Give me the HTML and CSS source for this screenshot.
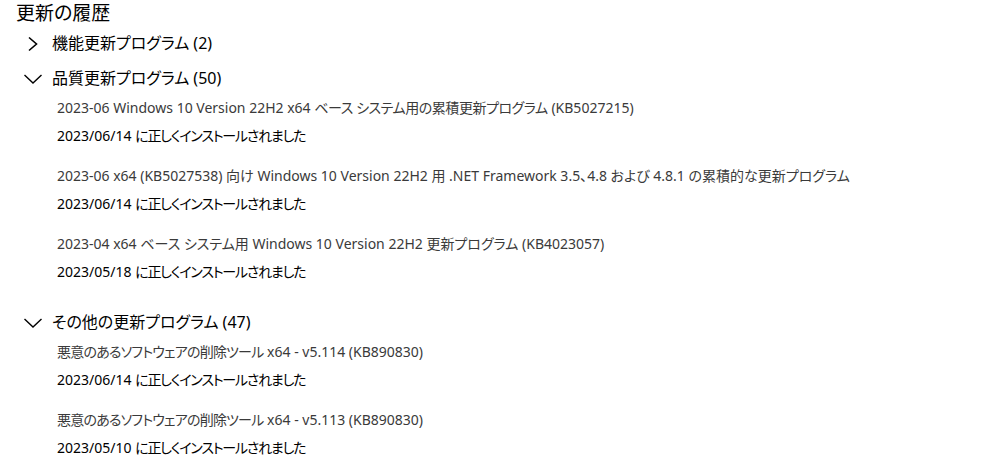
FILE: index.html
```html
<!DOCTYPE html>
<html lang="ja">
<head>
<meta charset="utf-8">
<link rel="stylesheet" href="styles.css">
</head>
<body>
<div class="page">
  <h1 class="title">更新の履歴</h1>

  <div class="group">
    <div class="group-head">
      <svg class="chev chev-right" width="12" height="16" viewBox="0 0 12 16"><path d="M2 1.5 L9.5 8 L2 14.5" fill="none" stroke="#000" stroke-width="1.6"/></svg>
      <span>機能更新プログラム (2)</span>
    </div>
  </div>

  <div class="group">
    <div class="group-head">
      <svg class="chev chev-down" width="20" height="10" viewBox="0 0 20 10"><path d="M1.5 1 L10 9 L18.5 1" fill="none" stroke="#000" stroke-width="1.4"/></svg>
      <span>品質更新プログラム (50)</span>
    </div>
    <div class="items">
      <div class="item">
        <div class="item-name">2023-06 Windows 10 Version 22H2 x64 <span class="ja">ベース システム用の累積更新プログラム</span> (KB5027215)</div>
        <div class="item-date">2023/06/14 <span class="ja-tight">に正しくインストールされました</span></div>
      </div>
      <div class="item">
        <div class="item-name">2023-06 x64 (KB5027538) 向け Windows 10 Version 22H2 用 .NET Framework 3.5、4.8 および 4.8.1 の累積的な更新プログラム</div>
        <div class="item-date">2023/06/14 <span class="ja-tight">に正しくインストールされました</span></div>
      </div>
      <div class="item">
        <div class="item-name">2023-04 x64 ベース システム用 Windows 10 Version 22H2 更新プログラム (KB4023057)</div>
        <div class="item-date">2023/05/18 <span class="ja-tight">に正しくインストールされました</span></div>
      </div>
    </div>
  </div>

  <div class="group group-other">
    <div class="group-head">
      <svg class="chev chev-down" width="20" height="10" viewBox="0 0 20 10"><path d="M1.5 1 L10 9 L18.5 1" fill="none" stroke="#000" stroke-width="1.4"/></svg>
      <span>その他の更新プログラム (47)</span>
    </div>
    <div class="items">
      <div class="item">
        <div class="item-name"><span class="ja-mid">悪意のあるソフトウェアの削除ツール</span> x64 - v5.114 (KB890830)</div>
        <div class="item-date">2023/06/14 <span class="ja-tight">に正しくインストールされました</span></div>
      </div>
      <div class="item">
        <div class="item-name"><span class="ja-mid">悪意のあるソフトウェアの削除ツール</span> x64 - v5.113 (KB890830)</div>
        <div class="item-date">2023/05/10 <span class="ja-tight">に正しくインストールされました</span></div>
      </div>
    </div>
  </div>
</div>
</body>
</html>
```

FILE: styles.css
```css
html, body {
  margin: 0;
  padding: 0;
  background: #ffffff;
}
body {
  font-family: "Noto Sans", "Noto Sans CJK JP", sans-serif;
  font-feature-settings: "palt";
  color: #000;
  overflow: hidden;
}
.page {
  width: 1005px;
  height: 457px;
}
.title {
  margin: 0;
  padding-left: 16px;
  font-size: 19px;
  font-weight: 400;
  line-height: 26px;
  height: 26px;
}
.group-head {
  display: flex;
  align-items: center;
  height: 35px;
  font-size: 16px;
  line-height: 35px;
}
.chev {
  flex: none;
  display: block;
}
.chev-right {
  margin-left: 27px;
  margin-right: 13px;
}
.chev-down {
  margin-left: 23px;
  margin-right: 9px;
}
.items {
  padding-left: 57px;
}
.item {
  margin-bottom: 12px;
}
.item-name {
  font-size: 14px;
  line-height: 24px;
  height: 24px;
  color: #3a3a3a;
  white-space: nowrap;
}
.item-date {
  font-size: 14px;
  line-height: 32px;
  height: 32px;
  color: #000;
  white-space: nowrap;
}
.ja {
  letter-spacing: -0.45px;
}
.ja-mid {
  letter-spacing: -0.8px;
}
.ja-tight {
  letter-spacing: -1.2px;
}
.group-other {
  margin-top: 17px;
}
```
